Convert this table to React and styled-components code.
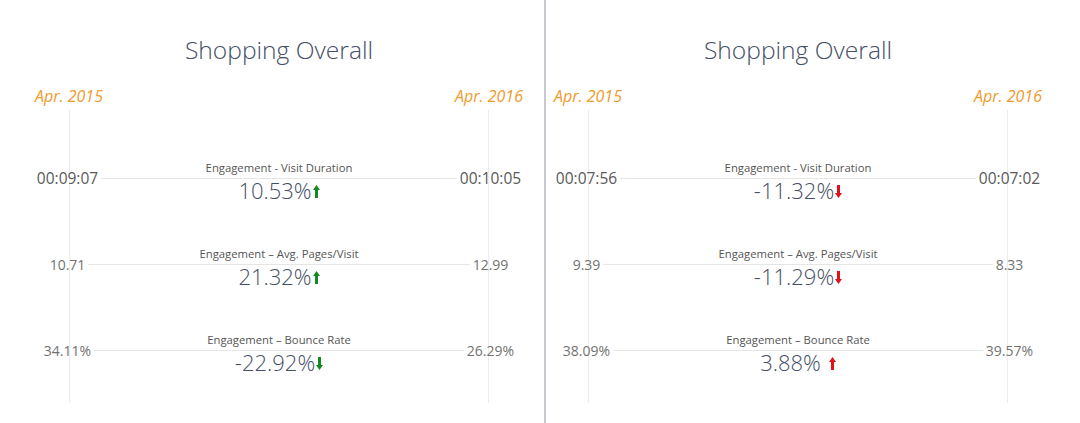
import styled, { createGlobalStyle } from "styled-components";

const panels = [
  {
    id: "a",
    offset: 29,
    rows: [
      { label: "Engagement - Visit Duration", from: "00:09:07", to: "00:10:05", change: "10.53%", dir: "up", tone: "good", strong: true },
      { label: "Engagement – Avg. Pages/Visit", from: "10.71", to: "12.99", change: "21.32%", dir: "up", tone: "good" },
      { label: "Engagement – Bounce Rate", from: "34.11%", to: "26.29%", change: "-22.92%", dir: "down", tone: "good" },
    ],
  },
  {
    id: "b",
    offset: 2,
    rows: [
      { label: "Engagement - Visit Duration", from: "00:07:56", to: "00:07:02", change: "-11.32%", dir: "down", tone: "bad", strong: true },
      { label: "Engagement – Avg. Pages/Visit", from: "9.39", to: "8.33", change: "-11.29%", dir: "down", tone: "bad" },
      { label: "Engagement – Bounce Rate", from: "38.09%", to: "39.57%", change: "3.88%", dir: "up", tone: "bad", spaced: true },
    ],
  },
];

const Arrow = ({ dir, tone }) => (
  <ArrowSvg viewBox="0 0 7 13" width="7" height="13" $dir={dir}>
    <path
      d="M3.5 0 L7 5 L5 5 L5 13 L2 13 L2 5 L0 5 Z"
      fill={tone === "good" ? "#13891f" : "#e2121b"}
    />
  </ArrowSvg>
);

const App = () => {
  return (
    <>
      <GlobalStyle />
      <Page>
        {panels.map((panel, i) => (
          <Panel key={panel.id} $offset={panel.offset} $divider={i > 0}>
            <Chart>
              <Title>Shopping Overall</Title>
              <Dates>
                <DateLabel>Apr. 2015</DateLabel>
                <DateLabel>Apr. 2016</DateLabel>
              </Dates>
              <Body>
                {panel.rows.map((row) => (
                  <Row key={row.label}>
                    <Side $side="left" $strong={row.strong}>
                      <span>{row.from}</span>
                    </Side>
                    <Label>{row.label}</Label>
                    <Rule />
                    <Change>
                      {row.change}
                      {row.spaced && <Gap />}
                      <Arrow dir={row.dir} tone={row.tone} />
                    </Change>
                    <Side $side="right" $strong={row.strong}>
                      <span>{row.to}</span>
                    </Side>
                  </Row>
                ))}
              </Body>
            </Chart>
          </Panel>
        ))}
      </Page>
    </>
  );
};

export default App;

const GlobalStyle = createGlobalStyle`
  html, body {
    margin: 0;
    padding: 0;
    background: #fff;
  }
  body {
    font-family: "Open Sans", "Noto Sans", sans-serif;
  }
`;

const Page = styled.div`
  width: 1080px;
  height: 423px;
  display: flex;
  background: #fff;
  overflow: hidden;
`;

const Panel = styled.div`
  flex: ${(p) => (p.$divider ? "1" : "0 0 544px")};
  padding-left: ${(p) => p.$offset}px;
  box-sizing: border-box;
  border-left: ${(p) => (p.$divider ? "2px solid #c9cad0" : "none")};
`;

const Chart = styled.div`
  width: 500px;
  display: flex;
  flex-direction: column;
`;

const Title = styled.div`
  margin-top: 34px;
  text-align: center;
  font-size: 24.6px;
  line-height: 32px;
  font-weight: 300;
  color: #454f66;
`;

const Dates = styled.div`
  margin-top: 19px;
  display: flex;
  justify-content: space-between;
`;

const DateLabel = styled.div`
  width: 80px;
  text-align: center;
  font-size: 16px;
  line-height: 22px;
  font-style: italic;
  color: #ef9a2c;
`;

const Body = styled.div`
  margin-top: 3px;
  padding: 25px 0 10px;
  background-image: linear-gradient(#ececec, #ececec),
    linear-gradient(#ececec, #ececec);
  background-size: 1px 100%, 1px 100%;
  background-position: 40px 0, 459px 0;
  background-repeat: no-repeat;
`;

const Row = styled.div`
  height: 86px;
  display: grid;
  grid-template-columns: 80px 1fr 80px;
  grid-template-rows: 1fr 1px 1fr;
`;

const Side = styled.div`
  grid-row: 1 / 4;
  grid-column: ${(p) => (p.$side === "left" ? 1 : 3)};
  display: flex;
  align-items: center;
  font-size: ${(p) => (p.$strong ? "15.5px" : "14px")};
  color: ${(p) => (p.$strong ? "#5a5a5a" : "#727272")};
  white-space: nowrap;

  &::before,
  &::after {
    content: "";
    flex: 1;
    height: 1px;
    margin-top: 1px;
  }
  &::${(p) => (p.$side === "left" ? "after" : "before")} {
    background: #e6e6e6;
    margin-${(p) => (p.$side === "left" ? "left" : "right")}: 3px;
  }
`;

const Label = styled.div`
  grid-column: 2;
  grid-row: 1;
  align-self: end;
  margin-bottom: 3px;
  text-align: center;
  font-size: 11.3px;
  line-height: 14px;
  color: #555;
`;

const Rule = styled.div`
  grid-column: 2;
  grid-row: 2;
  background: #e6e6e6;
`;

const Change = styled.div`
  grid-column: 2;
  grid-row: 3;
  align-self: start;
  display: flex;
  justify-content: center;
  align-items: baseline;
  font-size: 22px;
  line-height: 22px;
  font-weight: 300;
  color: #454f66;
`;

const Gap = styled.span`
  width: 7px;
`;

const ArrowSvg = styled.svg`
  margin-left: 1px;
  align-self: center;
  margin-top: 4px;
  transform: ${(p) => (p.$dir === "down" ? "rotate(180deg)" : "none")};
`;
